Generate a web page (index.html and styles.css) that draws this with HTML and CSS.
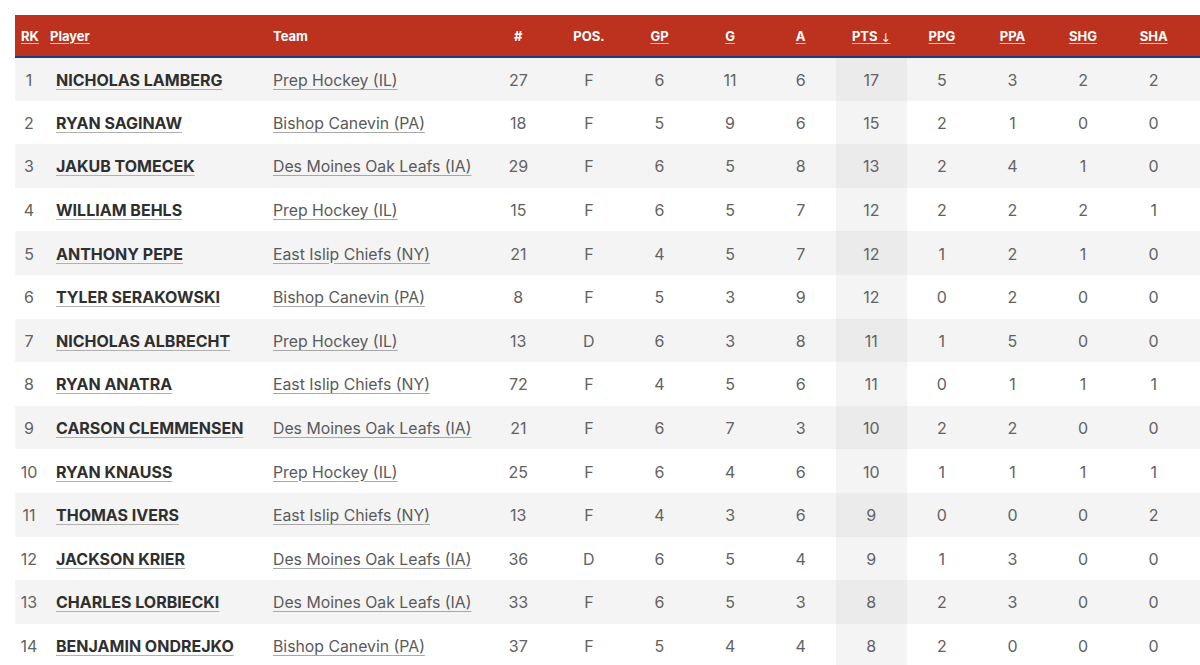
FILE: index.html
```html
<!DOCTYPE html>
<html>
<head>
<meta charset="utf-8">
<link rel="stylesheet" href="styles.css">
</head>
<body>
<div class="wrap">
<table class="stats">
  <colgroup>
    <col class="c-rk"><col class="c-player"><col class="c-team">
    <col class="c-num"><col class="c-num"><col class="c-num"><col class="c-num"><col class="c-num">
    <col class="c-num"><col class="c-num"><col class="c-num"><col class="c-num"><col class="c-num">
    <col class="c-extra">
  </colgroup>
  <thead>
    <tr>
      <th class="rk"><a href="#">RK</a></th>
      <th class="player"><a href="#">Player</a></th>
      <th class="team">Team</th>
      <th>#</th>
      <th>POS.</th>
      <th><a href="#">GP</a></th>
      <th><a href="#">G</a></th>
      <th><a href="#">A</a></th>
      <th><a href="#">PTS <span class="arrow">↓</span></a></th>
      <th><a href="#">PPG</a></th>
      <th><a href="#">PPA</a></th>
      <th><a href="#">SHG</a></th>
      <th><a href="#">SHA</a></th>
      <th></th>
    </tr>
  </thead>
  <tbody>
    <tr><td class="rk">1</td><td class="player"><a href="#">NICHOLAS LAMBERG</a></td><td class="team"><a href="#">Prep Hockey (IL)</a></td><td>27</td><td>F</td><td>6</td><td>11</td><td>6</td><td class="sorted">17</td><td>5</td><td>3</td><td>2</td><td>2</td><td></td></tr>
    <tr><td class="rk">2</td><td class="player"><a href="#">RYAN SAGINAW</a></td><td class="team"><a href="#">Bishop Canevin (PA)</a></td><td>18</td><td>F</td><td>5</td><td>9</td><td>6</td><td class="sorted">15</td><td>2</td><td>1</td><td>0</td><td>0</td><td></td></tr>
    <tr><td class="rk">3</td><td class="player"><a href="#">JAKUB TOMECEK</a></td><td class="team"><a href="#">Des Moines Oak Leafs (IA)</a></td><td>29</td><td>F</td><td>6</td><td>5</td><td>8</td><td class="sorted">13</td><td>2</td><td>4</td><td>1</td><td>0</td><td></td></tr>
    <tr><td class="rk">4</td><td class="player"><a href="#">WILLIAM BEHLS</a></td><td class="team"><a href="#">Prep Hockey (IL)</a></td><td>15</td><td>F</td><td>6</td><td>5</td><td>7</td><td class="sorted">12</td><td>2</td><td>2</td><td>2</td><td>1</td><td></td></tr>
    <tr><td class="rk">5</td><td class="player"><a href="#">ANTHONY PEPE</a></td><td class="team"><a href="#">East Islip Chiefs (NY)</a></td><td>21</td><td>F</td><td>4</td><td>5</td><td>7</td><td class="sorted">12</td><td>1</td><td>2</td><td>1</td><td>0</td><td></td></tr>
    <tr><td class="rk">6</td><td class="player"><a href="#">TYLER SERAKOWSKI</a></td><td class="team"><a href="#">Bishop Canevin (PA)</a></td><td>8</td><td>F</td><td>5</td><td>3</td><td>9</td><td class="sorted">12</td><td>0</td><td>2</td><td>0</td><td>0</td><td></td></tr>
    <tr><td class="rk">7</td><td class="player"><a href="#">NICHOLAS ALBRECHT</a></td><td class="team"><a href="#">Prep Hockey (IL)</a></td><td>13</td><td>D</td><td>6</td><td>3</td><td>8</td><td class="sorted">11</td><td>1</td><td>5</td><td>0</td><td>0</td><td></td></tr>
    <tr><td class="rk">8</td><td class="player"><a href="#">RYAN ANATRA</a></td><td class="team"><a href="#">East Islip Chiefs (NY)</a></td><td>72</td><td>F</td><td>4</td><td>5</td><td>6</td><td class="sorted">11</td><td>0</td><td>1</td><td>1</td><td>1</td><td></td></tr>
    <tr><td class="rk">9</td><td class="player"><a href="#">CARSON CLEMMENSEN</a></td><td class="team"><a href="#">Des Moines Oak Leafs (IA)</a></td><td>21</td><td>F</td><td>6</td><td>7</td><td>3</td><td class="sorted">10</td><td>2</td><td>2</td><td>0</td><td>0</td><td></td></tr>
    <tr><td class="rk">10</td><td class="player"><a href="#">RYAN KNAUSS</a></td><td class="team"><a href="#">Prep Hockey (IL)</a></td><td>25</td><td>F</td><td>6</td><td>4</td><td>6</td><td class="sorted">10</td><td>1</td><td>1</td><td>1</td><td>1</td><td></td></tr>
    <tr><td class="rk">11</td><td class="player"><a href="#">THOMAS IVERS</a></td><td class="team"><a href="#">East Islip Chiefs (NY)</a></td><td>13</td><td>F</td><td>4</td><td>3</td><td>6</td><td class="sorted">9</td><td>0</td><td>0</td><td>0</td><td>2</td><td></td></tr>
    <tr><td class="rk">12</td><td class="player"><a href="#">JACKSON KRIER</a></td><td class="team"><a href="#">Des Moines Oak Leafs (IA)</a></td><td>36</td><td>D</td><td>6</td><td>5</td><td>4</td><td class="sorted">9</td><td>1</td><td>3</td><td>0</td><td>0</td><td></td></tr>
    <tr><td class="rk">13</td><td class="player"><a href="#">CHARLES LORBIECKI</a></td><td class="team"><a href="#">Des Moines Oak Leafs (IA)</a></td><td>33</td><td>F</td><td>6</td><td>5</td><td>3</td><td class="sorted">8</td><td>2</td><td>3</td><td>0</td><td>0</td><td></td></tr>
    <tr><td class="rk">14</td><td class="player"><a href="#">BENJAMIN ONDREJKO</a></td><td class="team"><a href="#">Bishop Canevin (PA)</a></td><td>37</td><td>F</td><td>5</td><td>4</td><td>4</td><td class="sorted">8</td><td>2</td><td>0</td><td>0</td><td>0</td><td></td></tr>
  </tbody>
</table>
</div>
</body>
</html>
```

FILE: styles.css
```css
html, body {
  margin: 0;
  padding: 0;
  background: #ffffff;
  overflow: hidden;
}

.wrap {
  padding: 15px 0 0 15px;
  width: 1200px;
  box-sizing: border-box;
}

.stats {
  border-collapse: collapse;
  table-layout: fixed;
  width: 1185px;
  font-family: Inter, "Noto Sans", "Liberation Sans", sans-serif;
  font-size: 16px;
  color: #5b5b5b;
}

.c-rk { width: 28px; }
.c-player { width: 223px; }
.c-team { width: 217px; }
.c-num { width: 70.6px; }
.c-extra { width: 11px; }

.stats thead tr {
  background: #bc321e;
  height: 42px;
}

.stats th {
  color: #ffffff;
  font-size: 13px;
  font-weight: 700;
  text-align: center;
  padding: 0;
  border-bottom: 2px solid #1c3d78;
  white-space: nowrap;
}

.stats th a {
  color: #ffffff;
  text-decoration: underline;
  text-decoration-color: rgba(255, 255, 255, 0.7);
  text-underline-offset: 2px;
}

.stats th .arrow {
  font-family: "DejaVu Sans", sans-serif;
  font-weight: 400;
  font-size: 12px;
  position: relative;
  top: 1px;
}

.stats th.rk { text-align: left; padding-left: 6px; }
.stats th.player { text-align: left; padding-left: 7px; }
.stats th.team { text-align: left; padding-left: 7px; }

.stats tbody tr {
  height: 43.6px;
}

.stats tbody tr:nth-child(odd) {
  background: #f4f4f4;
}

.stats td {
  padding: 1px 0 0 0;
  text-align: center;
  white-space: nowrap;
  color: #626262;
}

.stats td.rk {
  text-align: center;
}

.stats td.player {
  text-align: left;
  padding-left: 13px;
}

.stats td.player a {
  color: #2f2f2f;
  font-weight: 700;
  text-decoration: underline;
  text-decoration-color: #b0b0b0;
  text-underline-offset: 3px;
}

.stats td.team {
  text-align: left;
  padding-left: 7px;
}

.stats td.team a {
  color: #5a5a5a;
  font-size: 15.8px;
  text-decoration: underline;
  text-decoration-color: #a8a8a8;
  text-underline-offset: 3px;
}

.stats tbody tr:nth-child(odd) td.sorted {
  background: #ebebeb;
}

.stats tbody tr:nth-child(even) td.sorted {
  background: #f4f4f4;
}
```
